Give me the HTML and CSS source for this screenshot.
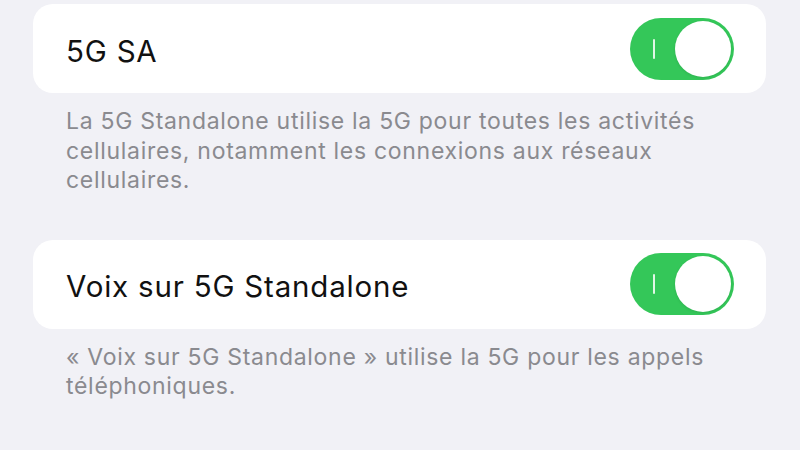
FILE: index.html
```html
<!DOCTYPE html>
<html lang="fr">
<head>
    <meta charset="UTF-8">
    <meta name="viewport" content="width=device-width, initial-scale=1.0">
    <title>Cellulaire</title>
    <link rel="stylesheet" href="styles.css">
</head>
<body>
    <div class="settings">
        <section class="group">
            <div class="row">
                <span class="row-label">5G SA</span>
                <button class="switch on" role="switch" aria-checked="true" aria-label="5G SA">
                    <span class="switch-mark"></span>
                    <span class="switch-knob"></span>
                </button>
            </div>
            <p class="footnote">La 5G Standalone utilise la 5G pour toutes les activités cellulaires, notamment les connexions aux réseaux cellulaires.</p>
        </section>

        <section class="group">
            <div class="row">
                <span class="row-label">Voix sur 5G Standalone</span>
                <button class="switch on" role="switch" aria-checked="true" aria-label="Voix sur 5G Standalone">
                    <span class="switch-mark"></span>
                    <span class="switch-knob"></span>
                </button>
            </div>
            <p class="footnote">« Voix sur 5G Standalone » utilise la 5G pour les appels téléphoniques.</p>
        </section>
    </div>
</body>
</html>
```

FILE: styles.css
```css
:root {
    --grouped-bg: #f1f1f6;
    --cell-bg: #ffffff;
    --label: #111111;
    --secondary: #8a8a8f;
    --green: #34c759;
}

body {
    margin: 0;
    background-color: var(--grouped-bg);
    font-family: 'Inter', 'Liberation Sans', sans-serif;
    color: var(--label);
}

.settings {
    padding: 4px 34px 0 33px;
    display: flex;
    flex-direction: column;
    gap: 44px;
}

.row {
    height: 89px;
    padding: 0 32px 0 33px;
    background-color: var(--cell-bg);
    border-radius: 20px;
    display: flex;
    align-items: center;
    justify-content: space-between;
}

.row-label {
    font-size: 29.5px;
    letter-spacing: 0.8px;
    padding-top: 4px;
}

.footnote {
    margin: 14px 0 0;
    padding: 0 40px 0 33px;
    font-size: 23px;
    letter-spacing: 0.7px;
    line-height: 29.5px;
    color: var(--secondary);
}

/* --- Switch --- */
.switch {
    position: relative;
    width: 104px;
    height: 62px;
    padding: 0;
    border: none;
    border-radius: 31px;
    background-color: #e5e5ea;
    cursor: pointer;
}

.switch.on {
    background-color: var(--green);
}

.switch-mark {
    position: absolute;
    left: 23px;
    top: 21px;
    width: 2px;
    height: 20px;
    border-radius: 1px;
    background-color: rgba(255, 255, 255, 0.85);
}

.switch-knob {
    position: absolute;
    top: 3px;
    left: 3px;
    width: 56px;
    height: 56px;
    border-radius: 50%;
    background-color: #fff;
    box-shadow: 0 1px 3px rgba(0, 0, 0, 0.1);
    transition: left 0.2s ease;
}

.switch.on .switch-knob {
    left: 45px;
}
```
